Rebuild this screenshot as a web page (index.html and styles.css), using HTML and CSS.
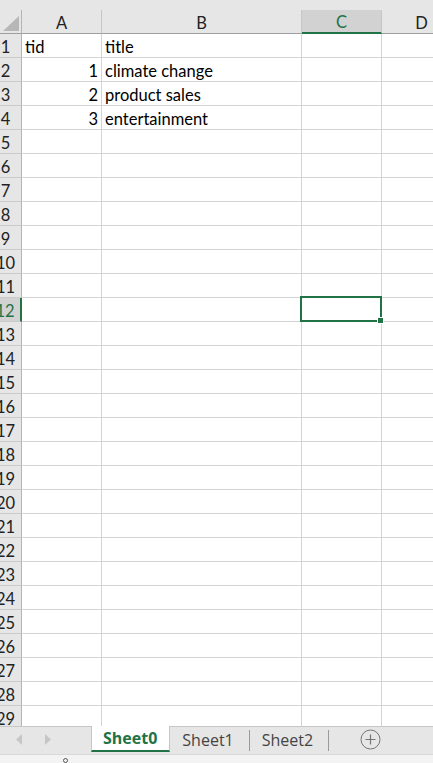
FILE: index.html
```html
<!DOCTYPE html>
<html>
<head>
<meta charset="utf-8">
<link rel="stylesheet" href="styles.css">
</head>
<body>
<div class="app">
  <div class="topstrip"></div>
  <div class="gridwrap">
    <div class="grid">
      <div class="corner"><svg width="31" height="23" viewBox="0 0 31 23"><polygon points="13,21 29,21 29,6" fill="#b7b7b7"/></svg></div><div class="ch">A</div><div class="ch">B</div><div class="ch ch-sel">C</div><div class="ch">D</div>
      <div class="rh">1</div><div class="c">tid</div><div class="c">title</div><div class="c"></div><div class="c"></div>
      <div class="rh">2</div><div class="c num">1</div><div class="c">climate change</div><div class="c"></div><div class="c"></div>
      <div class="rh">3</div><div class="c num">2</div><div class="c">product sales</div><div class="c"></div><div class="c"></div>
      <div class="rh">4</div><div class="c num">3</div><div class="c">entertainment</div><div class="c"></div><div class="c"></div>
      <div class="rh">5</div><div class="c"></div><div class="c"></div><div class="c"></div><div class="c"></div>
      <div class="rh">6</div><div class="c"></div><div class="c"></div><div class="c"></div><div class="c"></div>
      <div class="rh">7</div><div class="c"></div><div class="c"></div><div class="c"></div><div class="c"></div>
      <div class="rh">8</div><div class="c"></div><div class="c"></div><div class="c"></div><div class="c"></div>
      <div class="rh">9</div><div class="c"></div><div class="c"></div><div class="c"></div><div class="c"></div>
      <div class="rh">10</div><div class="c"></div><div class="c"></div><div class="c"></div><div class="c"></div>
      <div class="rh">11</div><div class="c"></div><div class="c"></div><div class="c"></div><div class="c"></div>
      <div class="rh rh-sel">12</div><div class="c"></div><div class="c"></div><div class="c sel"><span class="handle"></span></div><div class="c"></div>
      <div class="rh">13</div><div class="c"></div><div class="c"></div><div class="c"></div><div class="c"></div>
      <div class="rh">14</div><div class="c"></div><div class="c"></div><div class="c"></div><div class="c"></div>
      <div class="rh">15</div><div class="c"></div><div class="c"></div><div class="c"></div><div class="c"></div>
      <div class="rh">16</div><div class="c"></div><div class="c"></div><div class="c"></div><div class="c"></div>
      <div class="rh">17</div><div class="c"></div><div class="c"></div><div class="c"></div><div class="c"></div>
      <div class="rh">18</div><div class="c"></div><div class="c"></div><div class="c"></div><div class="c"></div>
      <div class="rh">19</div><div class="c"></div><div class="c"></div><div class="c"></div><div class="c"></div>
      <div class="rh">20</div><div class="c"></div><div class="c"></div><div class="c"></div><div class="c"></div>
      <div class="rh">21</div><div class="c"></div><div class="c"></div><div class="c"></div><div class="c"></div>
      <div class="rh">22</div><div class="c"></div><div class="c"></div><div class="c"></div><div class="c"></div>
      <div class="rh">23</div><div class="c"></div><div class="c"></div><div class="c"></div><div class="c"></div>
      <div class="rh">24</div><div class="c"></div><div class="c"></div><div class="c"></div><div class="c"></div>
      <div class="rh">25</div><div class="c"></div><div class="c"></div><div class="c"></div><div class="c"></div>
      <div class="rh">26</div><div class="c"></div><div class="c"></div><div class="c"></div><div class="c"></div>
      <div class="rh">27</div><div class="c"></div><div class="c"></div><div class="c"></div><div class="c"></div>
      <div class="rh">28</div><div class="c"></div><div class="c"></div><div class="c"></div><div class="c"></div>
      <div class="rh">29</div><div class="c"></div><div class="c"></div><div class="c"></div><div class="c"></div>
      <div class="rh">30</div><div class="c"></div><div class="c"></div><div class="c"></div><div class="c"></div>
    </div>
  </div>
  <div class="tabbar">
    <div class="nav">
      <svg width="8" height="11" viewBox="0 0 8 11"><polygon points="7,0 7,11 1,5.5" fill="#c6c6c6"/></svg>
      <svg width="8" height="11" viewBox="0 0 8 11"><polygon points="1,0 1,11 7,5.5" fill="#c6c6c6"/></svg>
    </div>
    <div class="tab tab-active">Sheet0</div>
    <div class="tab">Sheet1</div>
    <div class="tab">Sheet2</div>
    <div class="add">
      <svg width="21" height="21" viewBox="0 0 21 21"><circle cx="10.5" cy="10.5" r="9.5" fill="none" stroke="#767676" stroke-width="1"/><path d="M10.5 5.5v10M5.5 10.5h10" stroke="#767676" stroke-width="1.2"/></svg>
    </div>
  </div>
  <div class="status"><span class="status-mark"></span></div>
</div>
</body>
</html>
```
FILE: styles.css
```css
html, body {
  margin: 0;
  padding: 0;
}
body {
  width: 433px;
  height: 763px;
  overflow: hidden;
  background: #ffffff;
  font-family: Lato, "Liberation Sans", sans-serif;
}
.app {
  display: flex;
  flex-direction: column;
  height: 763px;
}
.topstrip {
  height: 10px;
  background: #e6e6e6;
  flex: none;
}
.gridwrap {
  flex: 1 1 auto;
  min-height: 0;
  overflow: hidden;
}
.grid {
  display: grid;
  grid-template-columns: 32px 80px 200px 80px 80px;
  grid-auto-rows: 24px;
  margin-left: -10px;
}
.grid > div {
  box-sizing: border-box;
  border-right: 1px solid #d4d4d4;
  border-bottom: 1px solid #d4d4d4;
  display: flex;
  align-items: center;
  font-size: 16.5px;
  color: #000;
  white-space: nowrap;
  padding-top: 2px;
}
.grid > .corner {
  display: block;
  padding: 0;
  background: #e6e6e6;
  border-right-color: #b4b4b4;
  border-bottom-color: #9e9e9e;
}
.corner svg {
  display: block;
}
.grid > .ch {
  background: #e6e6e6;
  border-right-color: #c6c6c6;
  border-bottom-color: #9e9e9e;
  justify-content: center;
  color: #222;
}
.grid > .ch-sel {
  background: #d2d2d2;
  color: #217346;
  border-bottom: 2px solid #217346;
}
.grid > .rh {
  background: #e6e6e6;
  border-right-color: #b4b4b4;
  border-bottom-color: #cacaca;
  justify-content: center;
  color: #222;
}
.grid > .rh-sel {
  background: #d2d2d2;
  color: #217346;
  border-right: 2px solid #217346;
}
.grid > .c {
  padding-left: 3px;
  padding-right: 3px;
}
.grid > .num {
  justify-content: flex-end;
}
.grid > .sel {
  position: relative;
  overflow: visible;
}
.sel::after {
  content: "";
  position: absolute;
  top: -2px;
  left: -2px;
  right: -1px;
  bottom: -1px;
  border: 2px solid #217346;
}
.handle {
  position: absolute;
  right: -2px;
  bottom: -2px;
  width: 5px;
  height: 5px;
  background: #217346;
  box-shadow: 0 0 0 1px #ffffff;
  z-index: 2;
}
.tabbar {
  flex: none;
  height: 28px;
  box-sizing: border-box;
  background: #e6e6e6;
  border-top: 1px solid #c6c6c6;
  display: flex;
  align-items: flex-start;
  font-family: "Open Sans", "Noto Sans", sans-serif;
  font-size: 16px;
}
.nav {
  width: 91px;
  height: 25px;
  display: flex;
  align-items: center;
  gap: 21px;
  padding-left: 15px;
  box-sizing: border-box;
}
.nav svg {
  display: block;
}
.tab {
  height: 25px;
  box-sizing: border-box;
  padding: 0 16px 0 12px;
  display: flex;
  align-items: center;
  color: #444;
  position: relative;
}
.tab::after {
  content: "";
  position: absolute;
  right: 0;
  top: 3px;
  bottom: 1px;
  width: 1px;
  background: #9a9a9a;
}
.tab-active {
  background: #ffffff;
  color: #217346;
  font-weight: 700;
  border-left: 1px solid #c6c6c6;
  border-right: 1px solid #c6c6c6;
  border-bottom: 2px solid #217346;
  padding: 0 12px 0 11px;
  margin-top: -1px;
  height: 26px;
}
.tab-active::after {
  display: none;
}
.add {
  height: 25px;
  display: flex;
  align-items: center;
  padding-left: 31px;
}
.add svg {
  display: block;
}
.status {
  flex: none;
  height: 8px;
  background: #f3f3f3;
  border-top: 1px solid #d8d8d8;
  position: relative;
}
.status-mark {
  position: absolute;
  left: 63px;
  top: 3px;
  width: 3px;
  height: 3px;
  border: 1px solid #555;
  border-radius: 50%;
}
```
